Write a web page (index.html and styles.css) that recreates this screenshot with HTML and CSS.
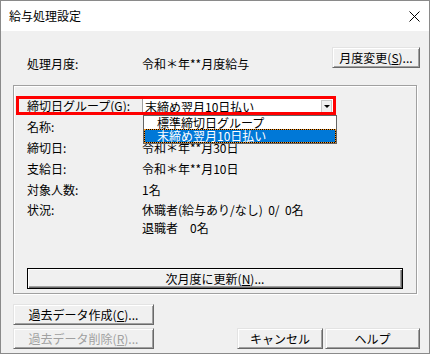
FILE: index.html
```html
<!DOCTYPE html>
<html lang="ja">
<head>
<meta charset="utf-8">
<title>給与処理設定</title>
<link rel="stylesheet" href="styles.css">
</head>
<body>
<div class="window">
  <div class="titlebar">
    <span class="title">給与処理設定</span>
    <svg class="close" width="11" height="11" viewBox="0 0 11 11"><path d="M0.5 0.5 L10.5 10.5 M10.5 0.5 L0.5 10.5" stroke="#000" stroke-width="1" fill="none"/></svg>
  </div>
  <div class="client">
    <div class="top">
      <div class="top-row">
        <span class="lbl">処理月度:</span>
        <span class="val">令和＊年**月度給与</span>
      </div>
      <button class="btn btn-month">月度変更(<u>S</u>)...</button>
    </div>

    <div class="group">
      <div class="highlight"></div>
      <div class="row row-combo">
        <span class="lbl">締切日グループ(<u>G</u>):</span>
        <div class="combo">
          <span class="combo-text">末締め翌月10日払い</span>
          <span class="combo-btn"><span class="arrow"></span></span>
          <ul class="droplist">
            <li class="item">標準締切日グループ</li>
            <li class="item selected">末締め翌月10日払い</li>
          </ul>
        </div>
      </div>
      <div class="row"><span class="lbl">名称:</span><span class="val"></span></div>
      <div class="row"><span class="lbl">締切日:</span><span class="val">令和＊年**月30日</span></div>
      <div class="row"><span class="lbl">支給日:</span><span class="val">令和＊年**月10日</span></div>
      <div class="row"><span class="lbl">対象人数:</span><span class="val">1名</span></div>
      <div class="row row-status">
        <span class="lbl">状況:</span>
        <div class="val multi">
          <span class="line">休職者(給与あり/なし)  0/  0名</span>
          <span class="line">退職者　0名</span>
        </div>
      </div>
      <button class="btn btn-default btn-next">次月度に更新(<u>N</u>)...</button>
    </div>

    <div class="bottom">
      <div class="left-btns">
        <button class="btn btn-past">過去データ作成(<u>C</u>)...</button>
        <button class="btn btn-past" disabled>過去データ削除(<u>R</u>)...</button>
      </div>
      <div class="right-btns">
        <button class="btn btn-cancel">キャンセル</button>
        <button class="btn btn-help">ヘルプ</button>
      </div>
    </div>
  </div>
</div>
</body>
</html>
```

FILE: styles.css
```css
* { box-sizing: border-box; }
html, body { margin: 0; padding: 0; background: #fff; }
body {
  font-family: "Noto Sans CJK JP", "Noto Sans", sans-serif;
  font-size: 12px;
  color: #000;
}
.window {
  width: 430px;
  height: 354px;
  border: 1px solid #8a8a8a;
  display: flex;
  flex-direction: column;
  background: #f0f0f0;
}
.titlebar {
  height: 30px;
  flex: none;
  background: #fff;
  display: flex;
  align-items: center;
  justify-content: space-between;
  padding: 0 9px 0 8px;
}
.title {
  font-size: 12px;
  line-height: 16px;
  color: #000;
}
.close { display: block; }

.client {
  flex: 1;
  display: flex;
  flex-direction: column;
  padding: 0 9px 4px 0;
}

.top {
  display: flex;
  justify-content: space-between;
  align-items: flex-start;
  padding: 16px 0 0 26px;
  height: 37px;
  flex: none;
}
.top-row {
  display: grid;
  grid-template-columns: 115px auto;
  margin-top: 10px;
  line-height: 14px;
}

.btn {
  font-family: "Noto Sans CJK JP", "Noto Sans", sans-serif;
  font-size: 12px;
  line-height: 15px;
  color: #000;
  background: #f0f0f0;
  height: 21px;
  padding: 0;
  margin: 0;
  border: 1px solid;
  border-color: #e3e3e3 #696969 #696969 #e3e3e3;
  box-shadow: inset 1px 1px 0 #fff, inset -1px -1px 0 #a0a0a0;
  text-align: center;
  display: block;
}
.btn u { text-decoration: underline; text-underline-offset: 1px; }
.btn:disabled { color: #a0a0a0; }
.btn-month { width: 88px; }

.group {
  position: relative;
  margin: 17px 0 0 12px;
  width: 404px;
  height: 209px;
  flex: none;
  border: 1px solid #a0a0a0;
  box-shadow: inset 1px 1px 0 #fff, 1px 1px 0 #fff;
  padding: 9px 13px 4px 13px;
  display: flex;
  flex-direction: column;
}
.row {
  display: flex;
  height: 21px;
  line-height: 14px;
  padding-top: 4px;
  flex: none;
}
.lbl { width: 115px; flex: none; white-space: nowrap; }
.val { white-space: pre; }
.row-combo { position: relative; z-index: 3; padding-top: 0; line-height: 21px; }
.combo {
  position: relative;
  width: 193px;
  height: 17px;
  margin-top: 3px;
  background: #fff;
  border: 1px solid #a0a0a0;
  display: flex;
  align-items: center;
  padding-left: 2px;
}
.combo-text { flex: 1; line-height: 14px; white-space: nowrap; }
.combo-btn {
  width: 11px;
  height: 13px;
  margin-right: 2px;
  border: 1px solid #c8c8c8;
  background: #f0f0f0;
  display: flex;
  align-items: center;
  justify-content: center;
}
.arrow {
  width: 0; height: 0;
  border-left: 3px solid transparent;
  border-right: 3px solid transparent;
  border-top: 3px solid #000;
}
.droplist {
  position: absolute;
  top: 16px;
  left: 0;
  width: 194px;
  margin: 0;
  padding: 0;
  list-style: none;
  background: #fff;
  border: 1px solid #646464;
  z-index: 1;
}
.item {
  height: 13px;
  line-height: 13px;
  padding-left: 13px;
  white-space: nowrap;
}
.item.selected {
  height: 14px;
  color: #fff;
  padding-left: 12px;
  border: 1px dotted #f7941d;
  background: linear-gradient(#0078d7, #0078d7) padding-box, #000;
  line-height: 12px;
}
.highlight {
  position: absolute;
  left: 2px;
  top: 10px;
  width: 320px;
  height: 19px;
  border: 3px solid #ff0000;
  z-index: 5;
  pointer-events: none;
}
.row-status { height: auto; line-height: 18px; padding-top: 1px; }
.multi { display: flex; flex-direction: column; }
.line { height: 18px; }
.btn-next {
  margin-top: auto;
  width: 376px;
  border: 1px solid #000;
  box-shadow: inset 1px 1px 0 #fff, inset -1px -1px 0 #696969, inset -2px -2px 0 #a0a0a0;
}

.bottom {
  margin-top: auto;
  display: flex;
  justify-content: space-between;
  align-items: flex-end;
  padding-left: 12px;
}
.left-btns { display: flex; flex-direction: column; gap: 3px; }
.btn-past { width: 141px; }
.right-btns { display: flex; gap: 2px; }
.btn-cancel { width: 86px; }
.btn-help { width: 95px; }
```
